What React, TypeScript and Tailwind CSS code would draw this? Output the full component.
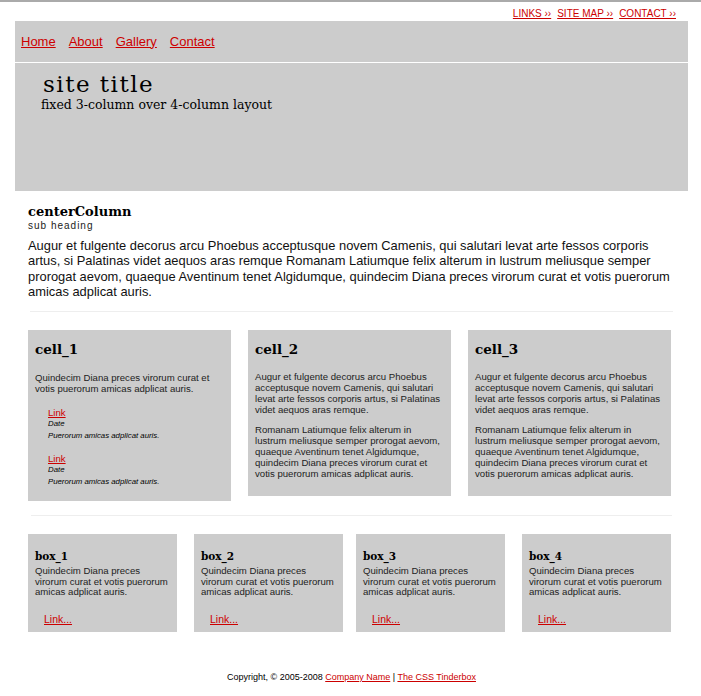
import React from "react";

const serif = "font-['Georgia','DejaVu_Serif',serif]";
const sans = "font-['Liberation_Sans',Arial,sans-serif]";

function Cell1() {
  return (
    <div className="w-[203px] bg-[#cccccc] px-[7px] pt-[10px] pb-[14px]">
      <h2 className={`${serif} text-[13.5px] font-bold leading-[18px] text-black`}>cell_1</h2>
      <p className="mt-[14px] text-[9.6px] leading-[11px] text-[#222]">
        Quindecim Diana preces virorum curat et votis puerorum amicas adplicat auris.
      </p>
      {[0, 1].map((i) => (
        <div key={i} className={`${i === 0 ? "mt-[13px]" : "mt-[12px]"} pl-[13px]`}>
          <a className="block text-[9.6px] leading-[11px] text-[#cc0000] underline">Link</a>
          <div className="text-[7.8px] italic leading-[11.5px] text-black">Date</div>
          <div className="text-[7.8px] italic leading-[11.5px] text-black">Puerorum amicas adplicat auris.</div>
        </div>
      ))}
    </div>
  );
}

function CellText({ title }: { title: string }) {
  return (
    <div className="w-[203px] bg-[#cccccc] px-[7px] pt-[10px] pb-[17px]">
      <h2 className={`${serif} text-[13.5px] font-bold leading-[18px] text-black`}>{title}</h2>
      <p className="mt-[14px] text-[9.6px] leading-[10.8px] text-[#222]">
        Augur et fulgente decorus arcu Phoebus acceptusque novem Camenis, qui salutari levat arte fessos corporis artus, si Palatinas videt aequos aras remque.
      </p>
      <p className="mt-[10px] text-[9.6px] leading-[10.8px] text-[#222]">
        Romanam Latiumque felix alterum in lustrum meliusque semper prorogat aevom, quaeque Aventinum tenet Algidumque, quindecim Diana preces virorum curat et votis puerorum amicas adplicat auris.
      </p>
    </div>
  );
}

function Box({ title, className }: { title: string; className?: string }) {
  return (
    <div className={`w-[149px] bg-[#cccccc] px-[7px] pt-[16px] pb-[7px] ${className ?? ""}`}>
      <h3 className={`${serif} text-[10.5px] font-bold leading-[13px] text-black`}>{title}</h3>
      <p className="mt-[3px] text-[9.6px] leading-[10.5px] text-[#222]">
        Quindecim Diana preces virorum curat et votis puerorum amicas adplicat auris.
      </p>
      <a className="mt-[15px] ml-[9px] block text-[10.5px] leading-[12px] text-[#cc0000] underline">Link...</a>
    </div>
  );
}

export default function App() {
  return (
    <div className={`${sans} min-h-[696px] border-t-[2px] border-[#aaaaaa] bg-white text-black`}>
      <div className="ml-[15px] w-[673px]">
        <div className="flex h-[19px] items-center justify-end gap-[6px] pr-[12px] pt-[3px] text-[10px] uppercase">
          <a className="text-[#cc0000] underline">LINKS ››</a>
          <a className="text-[#cc0000] underline">SITE MAP ››</a>
          <a className="text-[#cc0000] underline">CONTACT ››</a>
        </div>
        <nav className="flex h-[41px] items-center gap-[13px] bg-[#cccccc] pl-[6px] text-[13px]">
          <a className="text-[#cc0000] underline">Home</a>
          <a className="text-[#cc0000] underline">About</a>
          <a className="text-[#cc0000] underline">Gallery</a>
          <a className="text-[#cc0000] underline">Contact</a>
        </nav>
        <header className="mt-px h-[128px] bg-[#cccccc] pl-[26px] pt-[9px]">
          <h1 className={`${serif} pl-[2px] text-[23px] font-normal leading-[25px] tracking-[1.5px] text-black`}>site title</h1>
          <p className={`${serif} text-[12.5px] leading-[15px] text-black`}>fixed 3-column over 4-column layout</p>
        </header>

        <main className="px-[13px]">
          <div className="pt-[12px]">
            <h2 className={`${serif} text-[13px] font-bold leading-[17px]`}>centerColumn</h2>
            <div className="text-[10px] leading-[11px] tracking-[1px] text-[#222]">sub heading</div>
            <p className="mt-[7px] text-[12.9px] leading-[15.3px] text-[#111]">
              Augur et fulgente decorus arcu Phoebus acceptusque novem Camenis, qui salutari levat arte fessos corporis artus, si Palatinas videt aequos aras remque Romanam Latiumque felix alterum in lustrum meliusque semper prorogat aevom, quaeque Aventinum tenet Algidumque, quindecim Diana preces virorum curat et votis puerorum amicas adplicat auris.
            </p>
          </div>
          <hr className="mx-[2px] mt-[12px] border-0 border-t border-[#eeeeee]" />
          <div className="mt-[18px] flex items-start gap-[17px]">
            <Cell1 />
            <CellText title="cell_2" />
            <CellText title="cell_3" />
          </div>
          <hr className="mx-[3px] mt-[14px] border-0 border-t border-[#eeeeee]" />
          <div className="mt-[18px] flex items-start">
            <Box title="box_1" />
            <Box title="box_2" className="ml-[17px]" />
            <Box title="box_3" className="ml-[13px]" />
            <Box title="box_4" className="ml-[17px]" />
          </div>
        </main>

        <footer className="mt-[39px] text-center text-[9px] leading-[12px] text-black">
          Copyright, © 2005-2008 <a className="text-[#cc0000] underline">Company Name</a> | <a className="text-[#cc0000] underline">The CSS Tinderbox</a>
        </footer>
      </div>
    </div>
  );
}
